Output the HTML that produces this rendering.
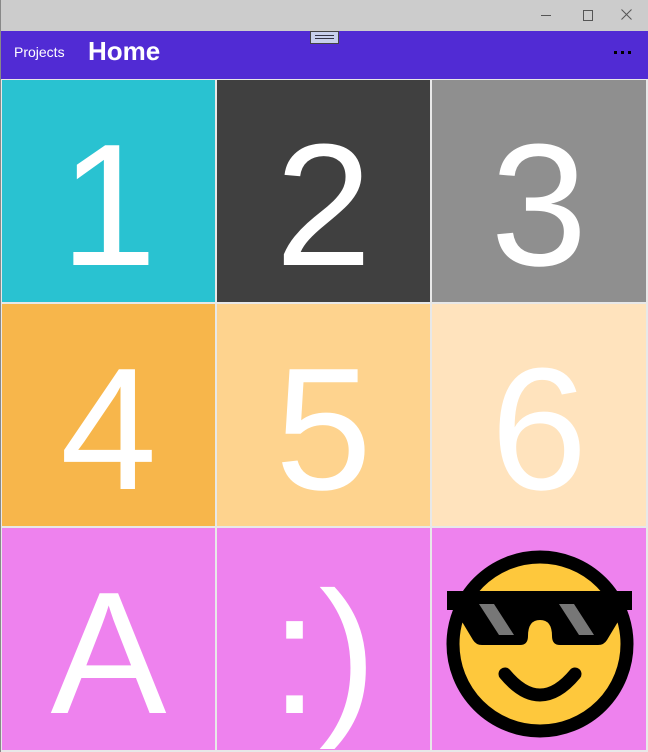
<!DOCTYPE html>
<html><head><style>
html,body{margin:0;padding:0;width:648px;height:752px;overflow:hidden;background:#e8e8e8;font-family:"Liberation Sans",sans-serif}
.tb{position:absolute;left:0;top:0;width:648px;height:31px;background:#cccccc}
.ab{position:absolute;left:0;top:31px;width:648px;height:48px;background:#512bd4}
.c{position:absolute;width:214px;height:222px;overflow:hidden}
.c span{position:absolute;left:0;right:0;top:38px;text-align:center;color:#fff;font-size:174px;line-height:1;font-weight:normal}
</style></head><body>
<div style="position:absolute;left:0;top:0;width:1px;height:752px;background:#888;z-index:5"></div>
<div class="tb">
<div style="position:absolute;left:541px;top:15px;width:10px;height:1px;background:#555"></div>
<div style="position:absolute;left:583px;top:10px;width:8px;height:9px;border:1px solid #555"></div>
<svg style="position:absolute;left:621px;top:9px" width="11" height="11"><path d="M0.5 0.5L10.5 10.5M10.5 0.5L0.5 10.5" stroke="#555" stroke-width="1"/></svg>
</div>
<div class="ab">
<div style="position:absolute;left:14px;top:13px;color:#fff;font-size:14px">Projects</div>
<div style="position:absolute;left:88px;top:5px;color:#fff;font-size:26px;font-weight:bold">Home</div>
<div style="position:absolute;left:614px;top:20px;width:3px;height:3px;background:#000;box-shadow:7px 0 #000,14px 0 #000"></div>
<div style="position:absolute;left:310px;top:0;width:27px;height:11px;background:#c8d0ec;border:1px solid #444">
<div style="position:absolute;left:4px;top:3px;width:19px;height:1px;background:#334"></div>
<div style="position:absolute;left:4px;top:6px;width:19px;height:1px;background:#334"></div></div>
</div>

<div class="c" style="left:2px;top:80px;width:213px;background:#29c2d1"><span>1</span></div>
<div class="c" style="left:217px;top:80px;width:213px;background:#404040"><span>2</span></div>
<div class="c" style="left:432px;top:80px;width:214px;background:#8f8f8f"><span>3</span></div>
<div class="c" style="left:2px;top:304px;width:213px;background:#f7b64b"><span>4</span></div>
<div class="c" style="left:217px;top:304px;width:213px;background:#fed38e"><span>5</span></div>
<div class="c" style="left:432px;top:304px;width:214px;background:#ffe3bd"><span>6</span></div>
<div class="c" style="left:2px;top:528px;width:213px;background:#ee82ee"><span>A</span></div>
<div class="c" style="left:217px;top:528px;width:213px;background:#ee82ee"><span>:)</span></div>
<div class="c" style="left:432px;top:528px;width:214px;background:#ee82ee">
<svg width="214" height="222" style="position:absolute;left:0;top:0">
<circle cx="108" cy="116" r="87" fill="#fec83c" stroke="#000" stroke-width="13"/>
<path d="M15 63 L200 63 L200 82 L193 82 L175 112 Q172 117 166 117 L128 117 Q120 117 120 108 Q120 92 108 92 Q96 92 96 108 Q96 117 88 117 L50 117 Q44 117 41 112 L23 82 L15 82 Z" fill="#000"/>
<path d="M47 76 L62 76 L82 107 L67 107 Z" fill="#777"/>
<path d="M127 76 L142 76 L162 107 L147 107 Z" fill="#777"/>
<path d="M73 146 Q108 188 143 146" fill="none" stroke="#000" stroke-width="13" stroke-linecap="round"/>
</svg></div>
</body></html>
